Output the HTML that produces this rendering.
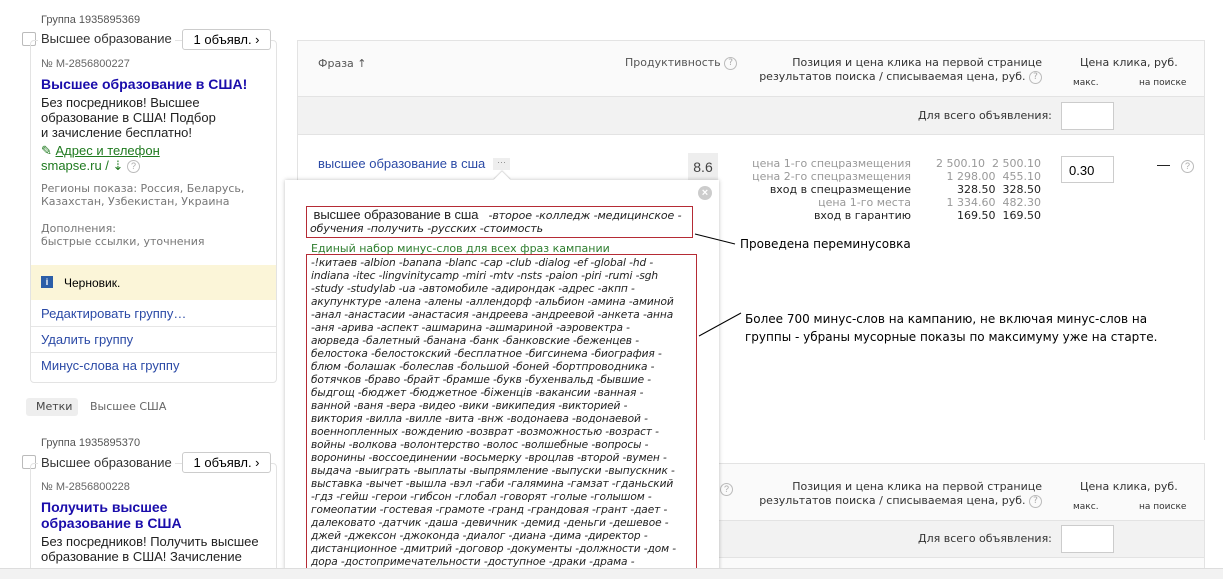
<!DOCTYPE html>
<html style="width:1223px;height:579px;overflow:hidden"><head><meta charset="utf-8"><style>
*{margin:0;padding:0;box-sizing:border-box}
body{width:1223px;height:579px;overflow:hidden;background:#fff;position:relative;font-family:"Liberation Sans",Arial,sans-serif;color:#000}
.a{position:absolute;white-space:nowrap}
.v{font-family:"DejaVu Sans",Verdana,sans-serif}
.q{display:inline-block;width:13px;height:13px;border:1px solid #bbb;border-radius:50%;font-size:9px;color:#aaa;text-align:center;line-height:11px;vertical-align:middle}
.lnk{color:#2b4aa6}
.btn{position:absolute;border:1px solid #ccc;border-radius:3px;background:#fff;font-size:13px;text-align:center}
.box{position:absolute;border:1px solid #ccc;background:#fff}
.mw{font-family:"DejaVu Sans",Verdana,sans-serif;font-style:italic;font-size:11px;line-height:13px;color:#222;letter-spacing:-0.1px}
</style></head><body>

<!-- left card 1 -->
<div class="a" style="left:41px;top:14px;font-size:11px;color:#555">Группа 1935895369</div>
<div class="a" style="left:22px;top:32px;width:14px;height:14px;border:1px solid #bbb;border-radius:2px"></div>
<div style="position:absolute;left:30px;top:40px;width:247px;height:343px;border:1px solid #e3e3e3;border-radius:4px"></div>
<div class="a" style="left:38px;top:31px;background:#fff;padding:0 3px;font-size:13px;color:#333">Высшее образование</div>
<div class="btn" style="left:182px;top:29px;width:89px;height:21px;line-height:19px">1 объявл. ›</div>
<div class="a" style="left:41px;top:58px;font-size:11px;color:#666">№ М-2856800227</div>
<div class="a" style="left:41px;top:76px;font-size:14px;font-weight:bold;color:#1a0dab">Высшее образование в США!</div>
<div class="a" style="left:41px;top:95px;font-size:13px;line-height:15px;color:#222">Без посредников! Высшее<br>образование в США! Подбор<br>и зачисление бесплатно!</div>
<div class="a" style="left:41px;top:143px;font-size:13px;color:#1f7a1f">✎ <u>Адрес и телефон</u></div>
<div class="a" style="left:41px;top:158px;font-size:13px;color:#1f7a1f">smapse.ru / ⇣ <span class="q">?</span></div>
<div class="a v" style="left:41px;top:182px;font-size:11px;line-height:13px;color:#777">Регионы показа: Россия, Беларусь,<br>Казахстан, Узбекистан, Украина</div>
<div class="a v" style="left:41px;top:222px;font-size:11px;line-height:13px;color:#777">Дополнения:<br>быстрые ссылки, уточнения</div>
<div style="position:absolute;left:31px;top:265px;width:245px;height:35px;background:#fbf5d8"></div>
<div class="a" style="left:41px;top:276px;width:12px;height:12px;background:#2c5ea8;color:#fff;font-size:9px;text-align:center;line-height:12px;font-weight:bold">i</div>
<div class="a" style="left:64px;top:276px;font-size:12px">Черновик.</div>
<div style="position:absolute;left:31px;top:326px;width:245px;border-top:1px solid #e6e6e6"></div>
<div style="position:absolute;left:31px;top:352px;width:245px;border-top:1px solid #e6e6e6"></div>
<div class="a lnk" style="left:41px;top:306px;font-size:13px">Редактировать группу…</div>
<div class="a lnk" style="left:41px;top:332px;font-size:13px">Удалить группу</div>
<div class="a lnk" style="left:41px;top:358px;font-size:13px">Минус-слова на группу</div>

<div class="a v" style="left:26px;top:398px;height:18px;width:52px;background:#eee;border-radius:3px;font-size:11px;line-height:18px;padding-left:10px;color:#444">Метки</div>
<div class="a v" style="left:90px;top:400px;font-size:11px;color:#666">Высшее США</div>

<!-- left card 2 -->
<div class="a" style="left:41px;top:437px;font-size:11px;color:#555">Группа 1935895370</div>
<div class="a" style="left:22px;top:455px;width:14px;height:14px;border:1px solid #bbb;border-radius:2px"></div>
<div style="position:absolute;left:30px;top:463px;width:247px;height:110px;border:1px solid #e3e3e3;border-radius:4px"></div>
<div class="a" style="left:38px;top:455px;background:#fff;padding:0 3px;font-size:13px;color:#333">Высшее образование</div>
<div class="btn" style="left:182px;top:452px;width:89px;height:21px;line-height:19px">1 объявл. ›</div>
<div class="a" style="left:41px;top:481px;font-size:11px;color:#666">№ М-2856800228</div>
<div class="a" style="left:41px;top:499px;font-size:14px;line-height:16px;font-weight:bold;color:#1a0dab">Получить высшее<br>образование в США</div>
<div class="a" style="left:41px;top:534px;font-size:13px;line-height:15px;color:#222">Без посредников! Получить высшее<br>образование в США! Зачисление</div>

<!-- table 1 -->
<div style="position:absolute;left:297px;top:40px;width:908px;height:400px;border:1px solid #e3e3e3;border-bottom:none;background:#fff"></div>
<div style="position:absolute;left:298px;top:41px;width:906px;height:56px;background:#fafafa;border-bottom:1px solid #e3e3e3"></div>
<div style="position:absolute;left:298px;top:97px;width:906px;height:38px;background:#f2f2f2;border-bottom:1px solid #e3e3e3"></div>
<div class="a v" style="left:318px;top:57px;font-size:11px;color:#555">Фраза ↑</div>
<div class="a v" style="left:625px;top:56px;font-size:11px;color:#555">Продуктивность <span class="q">?</span></div>
<div class="a v" style="left:740px;top:56px;width:302px;text-align:right;font-size:11px;line-height:14px;color:#333">Позиция и цена клика на первой странице<br>результатов поиска / списываемая цена, руб. <span class="q">?</span></div>
<div class="a v" style="left:1080px;top:56px;font-size:11px;color:#333">Цена клика, руб.</div>
<div class="a v" style="left:1073px;top:78px;font-size:9px;color:#333">макс.</div>
<div class="a v" style="left:1139px;top:78px;font-size:9px;color:#333">на поиске</div>
<div class="a v" style="left:918px;top:109px;font-size:11px;color:#333">Для всего объявления:</div>
<div class="box" style="left:1061px;top:102px;width:53px;height:28px"></div>
<div class="a" style="left:318px;top:156px;font-size:13px;color:#2b4aa6">высшее образование в сша</div>
<div class="a" style="left:493px;top:158px;width:17px;height:12px;background:#eee;font-size:9px;color:#888;text-align:center;line-height:8px">···</div>
<div class="a" style="left:688px;top:153px;width:30px;height:28px;background:#eee;font-size:14px;color:#444;text-align:center;line-height:28px">8.6</div>
<div class="a v" style="left:740px;top:157px;width:171px;text-align:right;font-size:11px;line-height:13px;color:#999">цена 1-го спецразмещения<br>цена 2-го спецразмещения<br><span style="color:#222">вход в спецразмещение</span><br>цена 1-го места<br><span style="color:#222">вход в гарантию</span></div>
<div class="a v" style="left:915px;top:157px;width:126px;text-align:right;font-size:11px;line-height:13px;color:#999">2 500.10&nbsp; 2 500.10<br>1 298.00&nbsp; 455.10<br><span style="color:#222">328.50&nbsp; 328.50</span><br>1 334.60&nbsp; 482.30<br><span style="color:#222">169.50&nbsp; 169.50</span></div>
<div class="box" style="left:1061px;top:156px;width:53px;height:27px;font-size:13px;padding:6px 7px">0.30</div>
<div class="a" style="left:1157px;top:157px;font-size:13px">—</div>
<div class="a" style="left:1181px;top:158px"><span class="q">?</span></div>

<!-- table 2 -->
<div style="position:absolute;left:297px;top:463px;width:908px;height:120px;border:1px solid #e3e3e3;background:#fafafa"></div>
<div style="position:absolute;left:298px;top:520px;width:906px;height:38px;background:#f2f2f2;border-top:1px solid #e3e3e3;border-bottom:1px solid #e3e3e3"></div>
<div class="a" style="left:720px;top:481px"><span class="q">?</span></div>
<div class="a v" style="left:740px;top:480px;width:302px;text-align:right;font-size:11px;line-height:14px;color:#333">Позиция и цена клика на первой странице<br>результатов поиска / списываемая цена, руб. <span class="q">?</span></div>
<div class="a v" style="left:1080px;top:480px;font-size:11px;color:#333">Цена клика, руб.</div>
<div class="a v" style="left:1073px;top:502px;font-size:9px;color:#333">макс.</div>
<div class="a v" style="left:1139px;top:502px;font-size:9px;color:#333">на поиске</div>
<div class="a v" style="left:918px;top:532px;font-size:11px;color:#333">Для всего объявления:</div>
<div class="box" style="left:1061px;top:525px;width:53px;height:28px"></div>

<!-- popup -->
<div style="position:absolute;left:285px;top:180px;width:434px;height:400px;background:#fff;box-shadow:0 0 4px rgba(0,0,0,.25)"></div>
<div class="a" style="left:496px;top:174px;width:12px;height:12px;background:#fff;transform:rotate(45deg);box-shadow:-1px -1px 1px rgba(0,0,0,.15)"></div>
<div class="a" style="left:698px;top:186px;width:14px;height:14px;border-radius:50%;background:#ccc;color:#fff;font-size:11px;font-weight:bold;text-align:center;line-height:14px">×</div>
<div class="a" style="left:306px;top:206px;width:387px;height:32px;border:1px solid #b52b35"></div>
<div class="a mw" style="left:310px;top:208px;font-size:11px"><span style="font-family:'Liberation Sans',Arial,sans-serif;font-style:normal;font-size:13px">&nbsp;высшее образование в сша</span> &nbsp; -второе -колледж -медицинское -<br>обучения -получить -русских -стоимость</div>
<div class="a v" style="left:311px;top:242px;font-size:11px;color:#2e7d2e">Единый набор минус-слов для всех фраз кампании</div>
<div class="a" style="left:306px;top:254px;width:391px;height:316px;border:1px solid #b52b35"></div>
<div class="a mw" style="left:311px;top:257px;font-size:10.6px">-!китаев -albion -banana -blanc -cap -club -dialog -ef -global -hd -<br>indiana -itec -lingvinitycamp -miri -mtv -nsts -paion -piri -rumi -sgh<br>-study -studylab -ua -автомобиле -адирондак -адрес -акпп -<br>акупунктуре -алена -алены -аллендорф -альбион -амина -аминой<br>-анал -анастасии -анастасия -андреева -андреевой -анкета -анна<br>-аня -арива -аспект -ашмарина -ашмариной -аэровектра -<br>аюрведа -балетный -банана -банк -банковские -беженцев -<br>белостока -белостокский -бесплатное -бигсинема -биография -<br>блюм -болашак -болеслав -большой -боней -бортпроводника -<br>ботячков -браво -брайт -брамше -букв -бухенвальд -бывшие -<br>быдгощ -бюджет -бюджетное -біженців -вакансии -ванная -<br>ванной -ваня -вера -видео -вики -википедия -викторией -<br>виктория -вилла -вилле -вита -внж -водонаева -водонаевой -<br>военнопленных -вождению -возврат -возможностью -возраст -<br>войны -волкова -волонтерство -волос -волшебные -вопросы -<br>воронины -воссоединении -восьмерку -вроцлав -второй -вумен -<br>выдача -выиграть -выплаты -выпрямление -выпуски -выпускник -<br>выставка -вычет -вышла -вэл -габи -галямина -гамзат -гданьский<br>-гдз -гейш -герои -гибсон -глобал -говорят -голые -голышом -<br>гомеопатии -гостевая -грамоте -гранд -грандовая -грант -дает -<br>далековато -датчик -даша -девичник -демид -деньги -дешевое -<br>джей -джексон -джоконда -диалог -диана -дима -директор -<br>дистанционное -дмитрий -договор -документы -должности -дом -<br>дора -достопримечательности -доступное -драки -драма -</div>

<!-- annotations -->
<svg style="position:absolute;left:0;top:0" width="1223" height="579"><line x1="695" y1="234" x2="735" y2="244" stroke="#000"/><line x1="699" y1="336" x2="741" y2="313" stroke="#000"/></svg>
<div class="a" style="left:740px;top:237px;font-family:'DejaVu Sans',sans-serif;font-size:12px">Проведена переминусовка</div>
<div class="a" style="left:745px;top:310px;font-size:12px;line-height:18px;font-family:'DejaVu Sans',sans-serif">Более 700 минус-слов на кампанию, не включая минус-слов на<br>группы - убраны мусорные показы по максимуму уже на старте.</div>

<div style="position:absolute;left:0;top:568px;width:1223px;height:11px;background:#f2f2f2;border-top:1px solid #ddd"></div>
</body></html>
